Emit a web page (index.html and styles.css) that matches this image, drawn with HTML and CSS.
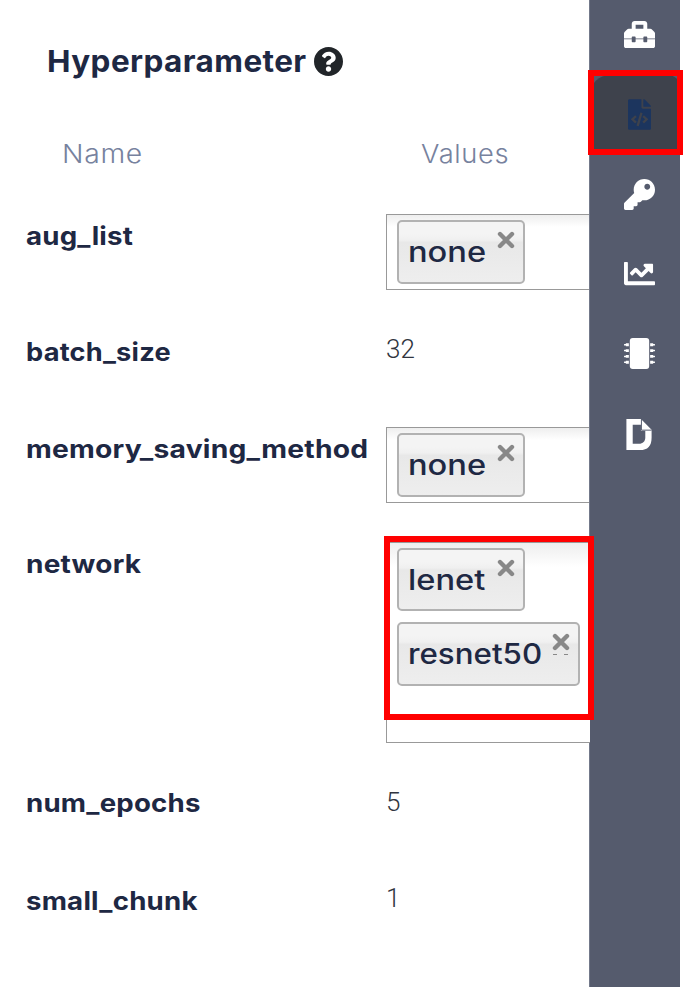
FILE: index.html
```html
<!DOCTYPE html>
<html lang="en">
<head>
<meta charset="utf-8">
<title>Hyperparameter</title>
<link rel="stylesheet" href="styles.css">
</head>
<body>
<div class="app">
  <main class="panel">
    <h1 class="title"><span>Hyperparameter</span>
      <svg class="help" viewBox="8 8 496 496"><path d="M504 256c0 136.997-111.043 248-248 248S8 392.997 8 256C8 119.083 119.043 8 256 8s248 111.083 248 248zM262.655 90c-54.497 0-89.255 22.957-116.549 63.758-3.536 5.286-2.353 12.415 2.715 16.258l34.699 26.31c5.205 3.947 12.621 3.008 16.665-2.122 17.864-22.658 30.113-35.797 57.303-35.797 20.429 0 45.698 13.148 45.698 32.958 0 14.976-12.363 22.667-32.534 33.976C247.128 238.528 216 254.941 216 296v4c0 6.627 5.373 12 12 12h56c6.627 0 12-5.373 12-12v-1.333c0-28.462 83.186-29.647 83.186-106.667 0-58.002-60.165-102-116.531-102zM256 338c-25.365 0-46 20.635-46 46 0 25.364 20.635 46 46 46s46-20.636 46-46c0-25.365-20.635-46-46-46z"/></svg>
    </h1>
    <div class="row head"><span class="head-name">Name</span><span class="head-values">Values</span></div>
    <div class="row tall">
      <span class="label aug">aug_list</span>
      <div class="field"><span class="chip"><span class="none">none</span><svg class="close" viewBox="0 0 18 18"><path d="M3 3l12 12M15 3L3 15"/></svg></span></div>
    </div>
    <div class="row"><span class="label batch">batch_size</span><span class="value">32</span></div>
    <div class="row tall">
      <span class="label memory">memory_saving_method</span>
      <div class="field"><span class="chip"><span class="none">none</span><svg class="close" viewBox="0 0 18 18"><path d="M3 3l12 12M15 3L3 15"/></svg></span></div>
    </div>
    <div class="row network-row">
      <span class="label network">network</span>
      <div class="field">
        <span class="chip short"><span class="lenet">lenet</span><svg class="close" viewBox="0 0 18 18"><path d="M3 3l12 12M15 3L3 15"/></svg></span>
        <span class="chip wide"><span class="resnet">resnet50</span><svg class="close dotted" viewBox="0 0 18 24"><path d="M3 3l12 12M15 3L3 15"/><path class="dash" d="M1 21.5h4M12 21.5h4"/></svg></span>
      </div>
      <div class="mark mark-field"></div>
    </div>
    <div class="row"><span class="label epochs">num_epochs</span><span class="value low">5</span></div>
    <div class="row"><span class="label chunk">small_chunk</span><span class="value">1</span></div>
  </main>
  <nav class="sidebar">
    <a class="item first"><svg class="icon" viewBox="0 0 512 512"><path d="M502.63 214.63l-45.25-45.25c-6-6-14.14-9.37-22.63-9.37H384V80c0-26.51-21.49-48-48-48H176c-26.51 0-48 21.49-48 48v80H77.25c-8.49 0-16.62 3.37-22.63 9.37L9.37 214.63c-6 6-9.37 14.14-9.37 22.63V320h128v-16c0-8.84 7.16-16 16-16h32c8.84 0 16 7.16 16 16v16h128v-16c0-8.84 7.16-16 16-16h32c8.84 0 16 7.16 16 16v16h128v-82.75c0-8.48-3.37-16.62-9.37-22.62zM320 160H192V96h128v64zm64 208c0 8.84-7.16 16-16 16h-32c-8.84 0-16-7.16-16-16v-32H192v32c0 8.84-7.16 16-16 16h-32c-8.84 0-16-7.16-16-16v-32H0v112c0 17.67 14.33 32 32 32h448c17.67 0 32-14.33 32-32v-112H384v32z"/></svg></a>
    <a class="item active"><svg class="icon file" viewBox="0 0 384 512"><path d="M384 121.941V128H256V0h6.059c6.365 0 12.47 2.529 16.971 7.029l97.941 97.941A24.005 24.005 0 0 1 384 121.941zM248 160c-13.2 0-24-10.8-24-24V0H24C10.745 0 0 10.745 0 24v464c0 13.255 10.745 24 24 24h336c13.255 0 24-10.745 24-24V160H248zM123.206 400.505a5.4 5.4 0 0 1-7.633.246l-64.866-60.812a5.4 5.4 0 0 1 0-7.879l64.866-60.812a5.4 5.4 0 0 1 7.633.246l19.579 20.885a5.4 5.4 0 0 1-.372 7.747L101.65 336l40.763 35.874a5.4 5.4 0 0 1 .372 7.747l-19.579 20.884zm51.295 50.479l-27.453-7.97a5.402 5.402 0 0 1-3.681-6.692l61.44-211.626a5.402 5.402 0 0 1 6.692-3.681l27.452 7.97a5.4 5.4 0 0 1 3.68 6.692l-61.44 211.626a5.397 5.397 0 0 1-6.69 3.681zm160.792-111.045l-64.866 60.812a5.4 5.4 0 0 1-7.633-.246l-19.58-20.885a5.4 5.4 0 0 1 .372-7.747L284.35 336l-40.763-35.874a5.4 5.4 0 0 1-.372-7.747l19.58-20.885a5.4 5.4 0 0 1 7.633-.246l64.866 60.812a5.4 5.4 0 0 1-.001 7.879z"/></svg><span class="mark mark-item"></span></a>
    <a class="item"><svg class="icon" viewBox="0 0 512 512"><path d="M512 176.001C512 273.203 433.202 352 336 352c-11.22 0-22.19-1.062-32.827-3.069l-24.012 27.014A23.999 23.999 0 0 1 261.223 384H224v40c0 13.255-10.745 24-24 24h-40v40c0 13.255-10.745 24-24 24H24c-13.255 0-24-10.745-24-24v-78.059c0-6.365 2.529-12.47 7.029-16.971l161.802-161.802C163.108 213.814 160 195.271 160 176 160 78.798 238.797.001 335.999 0 433.488-.001 512 78.511 512 176.001zM336 128c0 26.51 21.49 48 48 48s48-21.49 48-48-21.49-48-48-48-48 21.49-48 48z"/></svg></a>
    <a class="item"><svg class="icon" viewBox="0 0 512 512"><path d="M496 384H64V80c0-8.84-7.16-16-16-16H16C7.16 64 0 71.16 0 80v336c0 17.67 14.33 32 32 32h464c8.84 0 16-7.16 16-16v-32c0-8.84-7.16-16-16-16zM464 96H345.94c-21.38 0-32.09 25.85-16.97 40.97l32.4 32.4L288 242.75l-73.37-73.37c-12.5-12.5-32.76-12.5-45.25 0l-68.69 68.69c-6.25 6.25-6.25 16.38 0 22.63l22.62 22.62c6.25 6.25 16.38 6.25 22.63 0L192 237.25l73.37 73.37c12.5 12.5 32.76 12.5 45.25 0l96-96 32.4 32.4c15.12 15.12 40.97 4.41 40.97-16.97V112c.01-8.84-7.15-16-16-16z"/></svg></a>
    <a class="item"><svg class="icon" viewBox="0 0 512 512"><rect x="96" width="320" height="512" rx="48"/><path d="M80 88v48H30V124H6a6 6 0 0 1-6-6v-12a6 6 0 0 1 6-6H30V88zM80 184v48H30V220H6a6 6 0 0 1-6-6v-12a6 6 0 0 1 6-6H30V184zM80 280v48H30V316H6a6 6 0 0 1-6-6v-12a6 6 0 0 1 6-6H30V280zM80 376v48H30V412H6a6 6 0 0 1-6-6v-12a6 6 0 0 1 6-6H30V376zM432 88v48h50V124h24a6 6 0 0 0 6-6v-12a6 6 0 0 0-6-6h-24V88zM432 184v48h50V220h24a6 6 0 0 0 6-6v-12a6 6 0 0 0-6-6h-24V184zM432 280v48h50V316h24a6 6 0 0 0 6-6v-12a6 6 0 0 0-6-6h-24V280zM432 376v48h50V412h24a6 6 0 0 0 6-6v-12a6 6 0 0 0-6-6h-24V376z"/></svg></a>
    <a class="item"><svg class="icon doc" viewBox="0 0 26 32"><path fill-rule="evenodd" d="M0 0H15L26 11V19C26 28 22 32 14 32H0ZM6.5 6V25.5H13C17 25.5 19.5 23 19.5 19V12H15V6Z"/><path class="fold" d="M15.5 0V11.5H26"/></svg></a>
  </nav>
</div>
</body>
</html>
```
FILE: styles.css
```css
* { box-sizing: border-box; }
body { margin: 0; background: #fff; font-family: Inter, "Liberation Sans", sans-serif; color: #1e2843; }
.app { display: flex; width: 683px; height: 987px; padding-right: 3px; overflow: hidden; }
.panel { width: 589px; flex: none; }
.title { display: flex; align-items: center; gap: 8px; height: 60px; margin: 31px 0 0 47px; font-size: 30px; font-weight: 700; letter-spacing: 0.4px; line-height: 60px; }
.title span { width: 259px; white-space: nowrap; transform: scaleX(1.049); transform-origin: left; }
.help { width: 29px; height: 29px; fill: #212529; }
.row { position: relative; display: grid; grid-template-columns: 360px 1fr; align-items: start; height: 97.5px; padding: 19px 0 0 26px; }
.row.tall { height: 115.5px; }
.row.tall + .network-row { margin-top: -1px; }
.row.network-row { height: 239.5px; }
.row.head { height: 104px; padding: 43px 0 0 62px; font-size: 26px; font-weight: 300; line-height: 40px; color: #77829e; }
.head-name, .head-values { justify-self: start; letter-spacing: 0.6px; transform: scaleX(1.09); transform-origin: left; }
.head-values { margin-left: -1px; transform: scaleX(1.05); }
.label { justify-self: start; margin-top: 2px; font-size: 25px; font-weight: 700; line-height: 40px; letter-spacing: 0.2px; white-space: nowrap; transform: scaleX(1.105); transform-origin: left; }
.label.batch { transform: scaleX(1.088); }
.label.memory { transform: scaleX(1.13); }
.label.network { transform: scaleX(1.12); }
.value { font: 300 26px/38px Roboto, sans-serif; color: #303540; }
.value.low { margin-top: 2px; }
.field { display: flex; flex-direction: column; align-items: flex-start; gap: 11px; height: 76px; padding: 5px 10px; border: 1px solid #999; border-right: 0; background: linear-gradient(#eee, #fff 12px); }
.network-row .field { height: 201px; background: linear-gradient(#eee, #fff 24px); }
.chip { display: flex; justify-content: space-between; width: 128px; height: 64px; padding: 0 9px 0 9px; border: 2px solid #b2b2b2; border-radius: 5px; background: linear-gradient(#f4f4f4 20%, #f0f0f0 30%, #e8e8e8 34%, #eee); font-size: 28px; font-weight: 500; line-height: 61px; white-space: nowrap; }
.chip.short { height: 63px; }
.chip.wide { width: 183px; }
.none, .lenet, .resnet { transform: scaleX(1.165); transform-origin: left; }
.resnet { transform: scaleX(1.117); }
.close { width: 18px; height: 18px; margin: 9px -1px 0 0; fill: none; stroke: #888; stroke-width: 4.4; stroke-linecap: round; }
.close.dotted { height: 24px; }
.close .dash { stroke-width: 1; stroke-linecap: butt; }
.sidebar { width: 91px; background: #555b6d; border-left: 1px solid #73798a; }
.item { position: relative; display: flex; align-items: center; justify-content: center; height: 79.7px; padding: 0 0 1px 9px; }
.item.first { height: 75px; padding-bottom: 7px; }
.item.active { background: #3e424c; border-radius: 20px 12px 0 0; }
.icon { width: 31px; height: 31px; fill: #fff; }
.icon.file { width: 23px; fill: #1c355e; }
.icon.doc { width: 26px; height: 31px; margin: 2px 1px 0 0; }
.fold { fill: none; stroke: #555b6d; stroke-width: 1; }
.mark { position: absolute; z-index: 1; border: 6px solid #f00; }
.mark-item { left: -2px; top: -5px; width: 95px; height: 85px; }
.mark-field { left: 384px; top: 13px; width: 210px; height: 184px; }
```
